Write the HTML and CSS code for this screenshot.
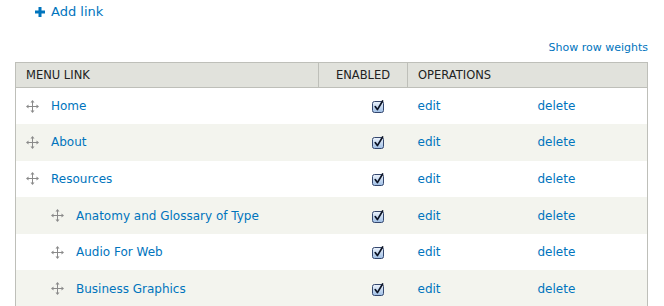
FILE: index.html
```html
<!DOCTYPE html>
<html>
<head>
<meta charset="utf-8">
<link rel="stylesheet" href="styles.css">
</head>
<body>
<div class="page">
  <ul class="action-links">
    <li><a href="#" class="add-link"><svg class="plus" width="10" height="10" viewBox="0 0 10 10"><path d="M3.5 0h3v3.5H10v3H6.5V10h-3V6.5H0v-3h3.5z" fill="#0074bd"/></svg>Add link</a></li>
  </ul>
  <div class="weights"><a href="#">Show row weights</a></div>
  <table class="menu-table">
    <colgroup>
      <col class="c1"><col class="c2"><col class="c3"><col class="c4">
    </colgroup>
    <thead>
      <tr>
        <th class="col-link">MENU LINK</th>
        <th class="col-enabled">ENABLED</th>
        <th class="col-ops" colspan="2">OPERATIONS</th>
      </tr>
    </thead>
    <tbody>
      <tr class="odd"><td><div class="link-wrap"><svg class="handle" width="13" height="13" viewBox="0 0 13 13"><use href="#h"/></svg><a href="#">Home</a></div></td><td class="cell-check"><svg class="check" width="14" height="14" viewBox="0 0 14 14"><use href="#c"/></svg></td><td><a href="#">edit</a></td><td><a href="#">delete</a></td></tr>
      <tr class="even"><td><div class="link-wrap"><svg class="handle" width="13" height="13" viewBox="0 0 13 13"><use href="#h"/></svg><a href="#">About</a></div></td><td class="cell-check"><svg class="check" width="14" height="14" viewBox="0 0 14 14"><use href="#c"/></svg></td><td><a href="#">edit</a></td><td><a href="#">delete</a></td></tr>
      <tr class="odd"><td><div class="link-wrap"><svg class="handle" width="13" height="13" viewBox="0 0 13 13"><use href="#h"/></svg><a href="#">Resources</a></div></td><td class="cell-check"><svg class="check" width="14" height="14" viewBox="0 0 14 14"><use href="#c"/></svg></td><td><a href="#">edit</a></td><td><a href="#">delete</a></td></tr>
      <tr class="even"><td><div class="link-wrap"><span class="indent"></span><svg class="handle" width="13" height="13" viewBox="0 0 13 13"><use href="#h"/></svg><a href="#">Anatomy and Glossary of Type</a></div></td><td class="cell-check"><svg class="check" width="14" height="14" viewBox="0 0 14 14"><use href="#c"/></svg></td><td><a href="#">edit</a></td><td><a href="#">delete</a></td></tr>
      <tr class="odd"><td><div class="link-wrap"><span class="indent"></span><svg class="handle" width="13" height="13" viewBox="0 0 13 13"><use href="#h"/></svg><a href="#">Audio For Web</a></div></td><td class="cell-check"><svg class="check" width="14" height="14" viewBox="0 0 14 14"><use href="#c"/></svg></td><td><a href="#">edit</a></td><td><a href="#">delete</a></td></tr>
      <tr class="even"><td><div class="link-wrap"><span class="indent"></span><svg class="handle" width="13" height="13" viewBox="0 0 13 13"><use href="#h"/></svg><a href="#">Business Graphics</a></div></td><td class="cell-check"><svg class="check" width="14" height="14" viewBox="0 0 14 14"><use href="#c"/></svg></td><td><a href="#">edit</a></td><td><a href="#">delete</a></td></tr>
    </tbody>
  </table>
</div>
<svg class="defs" width="0" height="0">
  <defs>
    <g id="h" fill="#8a8a8a" stroke="none">
      <rect x="6" y="2" width="1" height="9"/>
      <rect x="2" y="6" width="9" height="1"/>
      <path d="M6.5 0L8.5 2.5H4.5z"/>
      <path d="M6.5 13L8.5 10.5H4.5z"/>
      <path d="M0 6.5L2.5 4.5V8.5z"/>
      <path d="M13 6.5L10.5 4.5V8.5z"/>
    </g>
    <linearGradient id="cg" x1="0" y1="0" x2="0" y2="1">
      <stop offset="0" stop-color="#eef4fc"/>
      <stop offset="1" stop-color="#9dbde4"/>
    </linearGradient>
    <g id="c">
      <rect x="1.5" y="2.5" width="11" height="11" rx="2" fill="url(#cg)" stroke="#34476e" stroke-width="1"/>
      <path d="M4.2 7.6L6.4 10.6L11.6 2" fill="none" stroke="#0c1426" stroke-width="1.7" stroke-linecap="round" stroke-linejoin="round"/>
    </g>
  </defs>
</svg>
</body>
</html>
```
FILE: styles.css
```css
html, body { margin: 0; padding: 0; background: #fff; }
body { font-family: "DejaVu Sans", Verdana, sans-serif; font-size: 12px; color: #333; }
a { color: #0074bd; text-decoration: none; }
.defs { position: absolute; width: 0; height: 0; overflow: hidden; }
.page { padding: 0 16px 0 15px; }
.action-links { list-style: none; margin: 0; padding: 4px 0 0 20px; height: 26px; }
.add-link { display: inline-flex; align-items: center; font-size: 13px; }
.plus { margin-right: 6px; }
.weights { text-align: right; height: 14px; line-height: 14px; margin: 11px 0 7px; font-size: 11px; }
.menu-table { width: 100%; border-collapse: collapse; border: 1px solid #bebfb9; table-layout: fixed; }
.c1 { width: 303px; }
.c2 { width: 89px; }
.c3 { width: 120px; }
.menu-table thead th { background: #e1e2dc; height: 24px; padding: 0 10px; font-weight: normal; text-align: left; color: #222; font-size: 11.5px; border: 1px solid #bebfb9; }
.menu-table thead th.col-enabled { text-align: center; }
.menu-table tbody tr { height: 36.6px; }
.menu-table tbody tr.even { background: #f3f4ee; }
.menu-table tbody td { padding: 0 10px; vertical-align: middle; white-space: nowrap; }
.link-wrap { display: flex; align-items: center; }
.indent { display: inline-block; width: 25px; flex: none; }
.handle { flex: none; margin-right: 12px; }
.menu-table tbody td.cell-check { padding-left: 52px; }
.check { display: block; }
```
